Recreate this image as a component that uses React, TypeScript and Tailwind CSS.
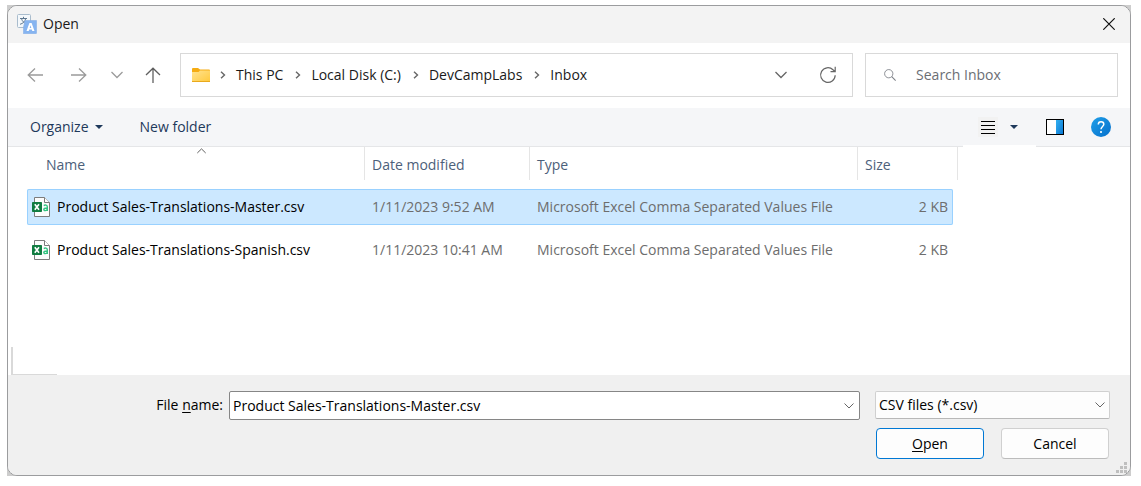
import React from "react";

type FileRow = {
  name: string;
  modified: string;
  type: string;
  size: string;
  selected: boolean;
};

const files: FileRow[] = [
  {
    name: "Product Sales-Translations-Master.csv",
    modified: "1/11/2023 9:52 AM",
    type: "Microsoft Excel Comma Separated Values File",
    size: "2 KB",
    selected: true,
  },
  {
    name: "Product Sales-Translations-Spanish.csv",
    modified: "1/11/2023 10:41 AM",
    type: "Microsoft Excel Comma Separated Values File",
    size: "2 KB",
    selected: false,
  },
];

const crumbs = ["This PC", "Local Disk (C:)", "DevCampLabs", "Inbox"];

function TranslateIcon() {
  return (
    <svg width="20" height="20" viewBox="0 0 20 20" fill="none" aria-hidden="true">
      <rect x="0.5" y="0.5" width="13" height="13" rx="1" fill="#f4f8fb" stroke="#a9bccd" />
      <path d="M3 4.500h7M6.500 2.800v1.700M8.700 4.700C8 7.500 6 9.500 3 10.300M4.500 4.700C5.200 7.200 7 9 9.500 9.800" stroke="#5f7890" />
      <path d="M8 6.500h11.500v12.500a.8.800 0 0 1-.8.800H6.500V13z" fill="#86b4f0" stroke="#86aee6" strokeWidth="0.600" />
      <path d="M9.500 17L12.400 9H14.600L17.500 17H15.300L14.800 15.400H12.200L11.700 17zM12.700 13.900H14.300L13.500 11.300z" fill="#fff" fillRule="evenodd" />
    </svg>
  );
}

function Arrow({ dir }: { dir: "left" | "right" | "up" }) {
  const d = {
    left: "M16 8H1.200M8 1.500L1.200 8L8 14.500",
    right: "M0 8H14.800M8 1.500L14.800 8L8 14.500",
    up: "M8 16V1.200M1 8L8 1.200L15 8",
  }[dir];
  return (
    <svg width="16" height="16" viewBox="0 0 16 16" fill="none" aria-hidden="true">
      <path d={d} stroke={dir === "up" ? "#606060" : "#9b9b9b"} strokeWidth="1.300" />
    </svg>
  );
}

function Chevron({ color = "#666", wide = false }: { color?: string; wide?: boolean }) {
  return (
    <svg width="12" height="8" viewBox="0 0 12 8" fill="none" aria-hidden="true">
      <path
        d={wide ? "M0.500 1L6 6.500L11.500 1" : "M1.500 1.500L6 6L10.500 1.500"}
        stroke={color}
        strokeWidth={wide ? "1.300" : "1"}
      />
    </svg>
  );
}

function CrumbChevron() {
  return (
    <svg width="6" height="8" viewBox="0 0 6 8" fill="none" aria-hidden="true">
      <path d="M1 0.700L4.500 4L1 7.300" stroke="#666" strokeWidth="1.400" />
    </svg>
  );
}

function FolderIcon() {
  return (
    <svg width="18" height="14" viewBox="0 0 18 14" aria-hidden="true">
      <defs>
        <linearGradient id="folder" x1="0" y1="0" x2="1" y2="1">
          <stop offset="0" stopColor="#ffe391" />
          <stop offset="1" stopColor="#ffc93c" />
        </linearGradient>
      </defs>
      <path d="M0 1a1 1 0 0 1 1-1h5l2 1.500h9a1 1 0 0 1 1 1V5H0z" fill="#f5ac13" />
      <path d="M0 4h6.500L8 2.500h10V14H0z" fill="url(#folder)" />
      <path d="M0 13.500h18" stroke="#e9a91c" />
    </svg>
  );
}

function RefreshIcon() {
  return (
    <svg width="18" height="18" viewBox="0 0 18 18" fill="none" aria-hidden="true">
      <path d="M16.200 9.200A7.300 7.300 0 1 1 14 3.800L16 5.500M16.200 0.800V5.600H11.500" stroke="#666" strokeWidth="1.200" />
    </svg>
  );
}

function SearchIcon() {
  return (
    <svg width="14" height="14" viewBox="0 0 14 14" fill="none" aria-hidden="true">
      <circle cx="5.500" cy="5.500" r="4.800" stroke="#7b7f86" />
      <path d="M9 9L13.500 13.500" stroke="#7b7f86" strokeWidth="1.200" />
    </svg>
  );
}

function Caret() {
  return (
    <svg width="8" height="4" viewBox="0 0 8 4" aria-hidden="true">
      <path d="M0 0h8L4 4z" fill="#1e395b" />
    </svg>
  );
}

function CsvIcon() {
  return (
    <svg width="18" height="20" viewBox="0 0 18 20" fill="none" aria-hidden="true">
      <path d="M2.500 0.500H12.500L17.500 5.500V19.500H2.500z" fill="#fcfcfc" stroke="#7c7c7c" />
      <path d="M12.500 0.500V5.500H17.500" fill="#fff" stroke="#7c7c7c" />
      <rect x="0" y="5" width="10" height="10" rx="0.800" fill="#107c41" />
      <path d="M2.800 7.300L7 12.700M7 7.300L2.800 12.700" stroke="#fff" strokeWidth="1.700" />
      <path d="M11.800 8.600C13 7.700 15.300 7.900 15.300 9.700V14M15.300 11C13.500 11 11.800 11.200 11.800 12.500C11.800 14 14.700 14 15.300 12.200" stroke="#33c481" strokeWidth="1.400" />
    </svg>
  );
}

function Grip() {
  const dots = [
    [8, 0],
    [4, 4],
    [8, 4],
    [0, 8],
    [4, 8],
    [8, 8],
  ];
  return (
    <svg width="11" height="11" viewBox="0 0 11 11" aria-hidden="true">
      {dots.map(([x, y]) => (
        <rect key={`${x}-${y}`} x={x} y={y} width="3" height="3" fill="#bfbfbf" />
      ))}
    </svg>
  );
}

export default function App() {
  return (
    <div className="flex min-h-screen flex-col bg-white pt-[5px] pr-[10px] pb-[10px] pl-[7px] font-['Open_Sans','Noto_Sans',sans-serif] text-[14px] leading-5 whitespace-nowrap text-[#1a1a1a]">
      <div className="flex flex-1 flex-col bg-[#cdcdcd]">
        <main className="flex flex-1 flex-col overflow-hidden rounded-[10px] border border-[#9b9c9e] bg-white">
          <header className="flex h-[37px] items-center bg-[#f3f3f3] pr-[15px] pb-px pl-[9px]">
            <TranslateIcon />
            <h1 className="ml-[6px] flex-1">Open</h1>
            <button type="button" aria-label="Close">
              <svg width="12" height="12" viewBox="0 0 12 12" aria-hidden="true">
                <path d="M0.300 0.300L11.700 11.700M11.700 0.300L0.300 11.700" stroke="#111" strokeWidth="1.200" />
              </svg>
            </button>
          </header>

          <nav className="flex h-[65px] items-center pr-3 pb-[2px] pl-[19px]">
            <button type="button" aria-label="Back">
              <Arrow dir="left" />
            </button>
            <button type="button" aria-label="Forward" className="ml-7">
              <Arrow dir="right" />
            </button>
            <button type="button" aria-label="Recent locations" className="ml-6">
              <Chevron color="#9b9b9b" wide />
            </button>
            <button type="button" aria-label="Up" className="ml-[22px]">
              <Arrow dir="up" />
            </button>
            <div className="ml-[19px] flex h-11 min-w-0 flex-1 items-center border border-[#d9d9d9] pr-[15px] pl-[11px]">
              <FolderIcon />
              <ol className="ml-[10px] flex flex-1 items-center">
                {crumbs.map((c) => (
                  <li key={c} className="flex items-center">
                    <CrumbChevron />
                    <a href="#" className="mr-3 ml-[10px]">
                      {c}
                    </a>
                  </li>
                ))}
              </ol>
              <button type="button" aria-label="Previous locations">
                <Chevron wide />
              </button>
              <button type="button" aria-label="Refresh" className="ml-8">
                <RefreshIcon />
              </button>
            </div>
            <label className="ml-3 flex h-11 w-[253px] items-center border border-[#d9d9d9] pl-[18px]">
              <SearchIcon />
              <input
                type="search"
                aria-label="Search Inbox"
                placeholder="Search Inbox"
                className="ml-5 w-full min-w-0 bg-transparent outline-none placeholder:text-[#6b6e74]"
              />
            </label>
          </nav>

          <div className="relative flex h-[39px] items-center border-b border-[#e5e6e8] bg-[#f5f6f8] pr-[19px] pl-[22px] text-[#1e395b]">
            <button type="button" className="flex items-center gap-[6px]">
              Organize
              <Caret />
            </button>
            <button type="button" className="ml-[37px]">
              New folder
            </button>
            <div className="ml-auto flex items-center">
              <button type="button" aria-label="Change view" className="bg-[#f2f2f2] p-[3px]">
                <svg width="14" height="14" viewBox="0 0 14 14" aria-hidden="true">
                  <path d="M0 1.500h14M0 5.500h14M0 9.500h14M0 13.500h14" stroke="#000" />
                </svg>
              </button>
              <button type="button" aria-label="More view options" className="ml-3">
                <Caret />
              </button>
              <button type="button" aria-label="Preview pane" className="ml-7">
                <svg width="18" height="16" viewBox="0 0 18 16" aria-hidden="true">
                  <defs>
                    <linearGradient id="pane" x1="0" y1="0" x2="1" y2="1">
                      <stop offset="0" stopColor="#34b0f0" />
                      <stop offset="1" stopColor="#0a78d4" />
                    </linearGradient>
                  </defs>
                  <rect width="18" height="16" fill="#000" />
                  <rect x="1" y="1" width="9" height="14" fill="#fff" />
                  <rect x="10" y="1" width="7" height="14" fill="url(#pane)" />
                </svg>
              </button>
              <button type="button" aria-label="Help" className="ml-[27px]">
                <svg width="20" height="20" viewBox="0 0 20 20" fill="none" aria-hidden="true">
                  <defs>
                    <linearGradient id="help" x1="0" y1="0" x2="1" y2="1">
                      <stop offset="0" stopColor="#1f9fe8" />
                      <stop offset="1" stopColor="#0670cc" />
                    </linearGradient>
                  </defs>
                  <circle cx="10" cy="10" r="10" fill="url(#help)" />
                  <path d="M7.300 7.500C7.300 3.800 12.800 4 12.800 7.300C12.800 9.500 10 9.500 10 12.300" stroke="#fff" strokeWidth="1.500" />
                  <circle cx="10" cy="15" r="1.100" fill="#fff" />
                </svg>
              </button>
            </div>
            <div className="absolute right-[94px] -bottom-px h-[2px] w-[73px] bg-white" />
          </div>

          <section className="relative flex-1 pb-6 pl-[19px]">
            <table className="block">
              <thead className="block">
                <tr className="grid grid-cols-[338px_165px_328px_100px] text-left text-[#4c607a]">
                  <th scope="col" className="relative h-[33px] border-r border-[#e5e5e5] pt-2 pl-[19px] font-normal">
                    Name
                    <svg className="absolute top-px left-[170px]" width="9" height="6" viewBox="0 0 9 6" fill="none" aria-hidden="true">
                      <path d="M0.300 5L4.500 0.900L8.700 5" stroke="#606060" />
                    </svg>
                  </th>
                  <th scope="col" className="border-r border-[#e5e5e5] pt-2 pl-[7px] font-normal">
                    Date modified
                  </th>
                  <th scope="col" className="border-r border-[#e5e5e5] pt-2 pl-[7px] font-normal">
                    Type
                  </th>
                  <th scope="col" className="border-r border-[#e5e5e5] pt-2 pl-[7px] font-normal">
                    Size
                  </th>
                </tr>
              </thead>
              <tbody className="mt-[9px] flex flex-col items-start gap-[7px]">
                {files.map((f) => (
                  <tr
                    key={f.name}
                    className={
                      "grid h-9 grid-cols-[338px_165px_328px_95px] items-center rounded-[2px] text-[#6d6d6d] " +
                      (f.selected ? "bg-[#cce8ff] ring-1 ring-[#99d1ff] ring-inset" : "")
                    }
                  >
                    <td className="flex items-center gap-[7px] pl-[5px] text-black">
                      <CsvIcon />
                      {f.name}
                    </td>
                    <td className="pl-[7px]">{f.modified}</td>
                    <td className="pl-[7px]">{f.type}</td>
                    <td className="pr-[5px] text-right">{f.size}</td>
                  </tr>
                ))}
              </tbody>
            </table>
            <div className="absolute bottom-0 left-[3px] h-7 w-[46px] border-b border-l-2 border-[#d9d9d9]" />
          </section>

          <footer className="relative flex h-[100px] items-start bg-[#f0f0f0] pt-4 pr-5 text-black">
            <label htmlFor="file-name" className="w-[215px] pt-1 text-right">
              File <span className="underline underline-offset-2">n</span>ame:
            </label>
            <div className="ml-[6px] flex h-[29px] min-w-0 flex-1 items-center rounded-[2px] border border-[#868686] bg-white pr-1 pl-[3px]">
              <input
                id="file-name"
                type="text"
                defaultValue="Product Sales-Translations-Master.csv"
                className="min-w-0 flex-1 outline-none"
              />
              <button type="button" aria-label="Recent file names">
                <Chevron />
              </button>
            </div>
            <div className="ml-[15px] w-[235px]">
              <div className="relative">
                <select
                  aria-label="File type"
                  className="h-7 w-full appearance-none rounded-[2px] border border-[#d0d0d0] border-b-[#b8b8b8] bg-[#fdfdfd] pl-[3px]"
                >
                  <option>CSV files (*.csv)</option>
                </select>
                <span className="pointer-events-none absolute top-[10px] right-1">
                  <Chevron />
                </span>
              </div>
              <div className="mt-[9px] flex justify-between pr-px pl-px">
                <button type="button" className="h-[31px] w-[108px] rounded-[4px] border border-[#0078d4] bg-[#fdfdfd]">
                  <span className="underline underline-offset-2">O</span>pen
                </button>
                <button type="button" className="h-[31px] w-[108px] rounded-[4px] border border-[#d0d0d0] border-b-[#bcbcbc] bg-[#fdfdfd]">
                  Cancel
                </button>
              </div>
            </div>
            <div className="absolute right-[3px] bottom-[2px]">
              <Grip />
            </div>
          </footer>
        </main>
      </div>
    </div>
  );
}
